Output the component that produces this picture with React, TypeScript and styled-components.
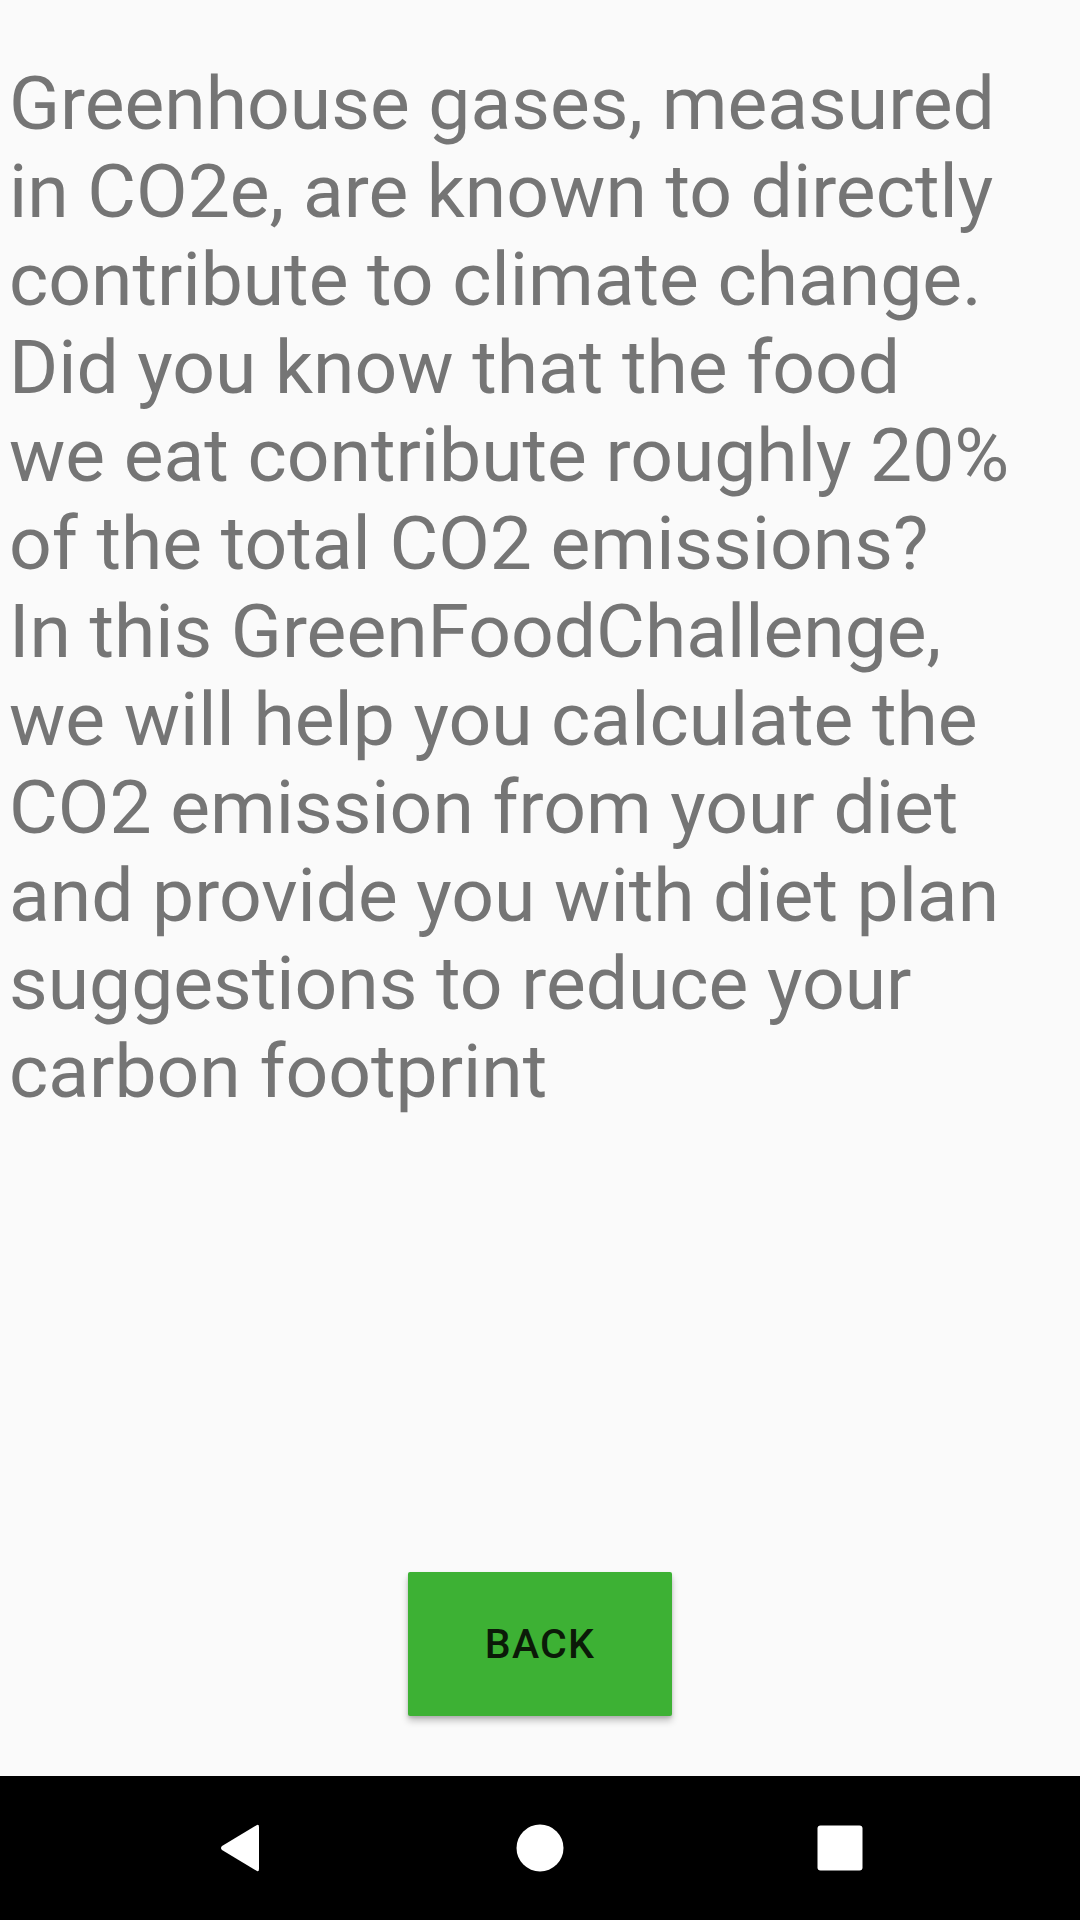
import React from "react";
import styled, { createGlobalStyle } from "styled-components";

const Global = createGlobalStyle`
  html, body { margin: 0; padding: 0; background: #fafafa; }
  #root { height: 1920px; }
`;

const Screen = styled.div`
  width: 1080px;
  height: 1920px;
  display: flex;
  flex-direction: column;
  background: #fafafa;
  font-family: Roboto, "Noto Sans", sans-serif;
`;

const Content = styled.main`
  flex: 1;
  display: flex;
  flex-direction: column;
  align-items: center;
  padding: 59px 0 60px 0;
`;

const Paragraph = styled.p`
  align-self: stretch;
  margin: 0;
  padding: 0 9px;
  font-size: 75px;
  line-height: 88px;
  color: #757575;
  white-space: pre-line;
`;

const Spacer = styled.div`
  flex: 1;
`;

const BackButton = styled.button`
  width: 264px;
  height: 144px;
  border: none;
  border-radius: 2px;
  background: #3db134;
  color: #0b1a08;
  font-family: Roboto, sans-serif;
  font-weight: 500;
  font-size: 41px;
  letter-spacing: 0.03em;
  box-shadow: 0 5px 7px rgba(0, 0, 0, 0.22), 0 2px 3px rgba(0, 0, 0, 0.12);
  cursor: pointer;
`;

const NavBar = styled.nav`
  height: 144px;
  background: #000;
  display: grid;
  grid-template-columns: repeat(3, 1fr);
  align-items: center;
  justify-items: center;
`;

const NavSlot = styled.div<{ $shift: number }>`
  display: flex;
  align-items: center;
  justify-content: center;
  transform: translateX(${(p) => p.$shift}px);
`;

const text = `Greenhouse gases, measured
in CO2e, are known to directly
contribute to climate change.
Did you know that the food
we eat contribute roughly 20%
of the total CO2 emissions?
In this GreenFoodChallenge,
we will help you calculate the
CO2 emission from your diet
and provide you with diet plan
suggestions to reduce your
carbon footprint`;

export default function App() {
  return (
    <>
      <Global />
      <Screen>
        <Content>
          <Paragraph>{text}</Paragraph>
          <Spacer />
          <BackButton>BACK</BackButton>
        </Content>
        <NavBar>
          <NavSlot $shift={60}>
            <svg width="44" height="52" viewBox="0 0 44 52">
              <path
                d="M39 3 Q41 2 41 5 L41 47 Q41 50 39 49 L4 28 Q2 26 4 24 Z"
                fill="#fff"
              />
            </svg>
          </NavSlot>
          <NavSlot $shift={0}>
            <svg width="48" height="48" viewBox="0 0 48 48">
              <circle cx="24" cy="24" r="23.5" fill="#fff" />
            </svg>
          </NavSlot>
          <NavSlot $shift={-60}>
            <svg width="46" height="46" viewBox="0 0 46 46">
              <rect x="0.5" y="0.5" width="45" height="45" rx="3" fill="#fff" />
            </svg>
          </NavSlot>
        </NavBar>
      </Screen>
    </>
  );
}
